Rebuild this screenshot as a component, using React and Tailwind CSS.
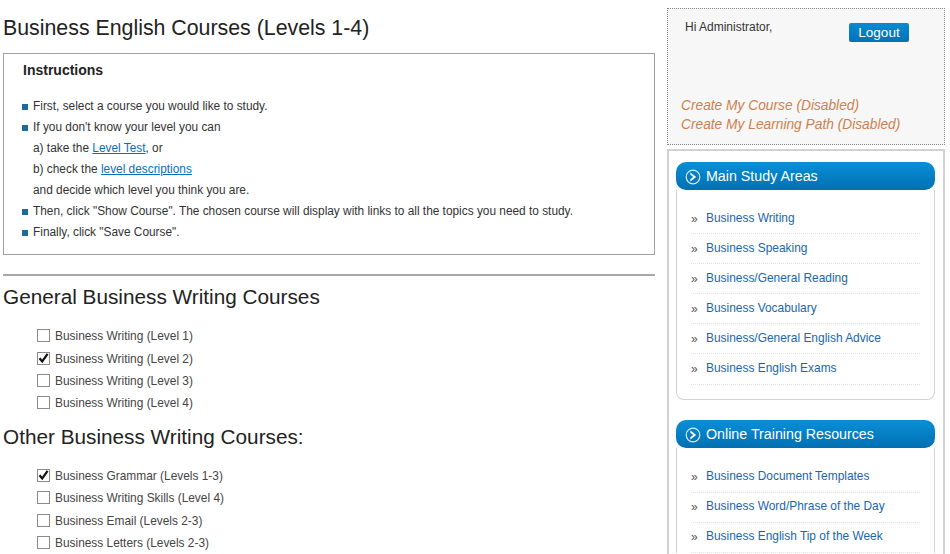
const FONT = "font-['Liberation_Sans',Arial,sans-serif]";

function Check({ label, checked }) {
  return (
    <label className="flex h-[22.4px] items-center pl-[34px]">
      <span className="relative mb-[3px] mr-[5px] flex h-[13px] w-[13px] shrink-0">
        <input type="checkbox" defaultChecked={checked} className="h-[13px] w-[13px] appearance-none border border-[#8a8a8a] bg-white" />
        {checked && (
          <svg viewBox="0 0 13 13" className="absolute left-0 top-0 h-[13px] w-[13px]">
            <path d="M2.5 6.2 L5.2 9.4 L10.6 1.8" fill="none" stroke="#111" strokeWidth="2.2" />
          </svg>
        )}
      </span>
      <span className="text-[11.9px] text-[#444]">{label}</span>
    </label>
  );
}

function Bullet({ children }) {
  return (
    <li className="flex h-[21px] items-center">
      <span className="mr-[5px] h-[6px] w-[6px] shrink-0 bg-[#1f6a9c]" />
      <span>{children}</span>
    </li>
  );
}

function Sub({ children }) {
  return <li className="flex h-[21px] items-center pl-[11px]"><span>{children}</span></li>;
}

function CircleArrow() {
  return (
    <svg viewBox="0 0 16 16" className="mr-[5px] h-[16px] w-[16px] shrink-0">
      <circle cx="8" cy="8" r="6.8" fill="none" stroke="#d5ecf8" strokeWidth="1.2" />
      <path d="M5.4 3.6 L11.2 8 L5.4 12.4 L5.4 10.2 L8.2 8 L5.4 5.8 Z" fill="#fff" />
    </svg>
  );
}

function Panel({ title, items, last }) {
  return (
    <section className={last ? "" : "mb-[20px]"}>
      <h3 className="flex h-[28px] items-center rounded-[10px] bg-gradient-to-b from-[#0a8fd6] to-[#0270b3] pl-[9px] pt-[2px] text-[14.25px] text-white">
        <CircleArrow />
        {title}
      </h3>
      <div className={`border-x border-[#d2d2d2] px-[14px] ${last ? "pt-[15px]" : "rounded-b-[8px] border-b pb-[14px] pt-[14px]"}`}>
        {items.map((t) => (
          <div key={t} className="flex h-[30.1px] items-center border-b border-dotted border-[#e2e2e2]">
            <span className="mr-[8px] w-[7px] text-[12px] leading-none text-[#555]">»</span>
            <a className="text-[11.93px] text-[#1a66ad]">{t}</a>
          </div>
        ))}
      </div>
    </section>
  );
}

export default function App() {
  return (
    <div className={`${FONT} flex h-[554px] w-[950px] overflow-hidden bg-white text-[#333]`}>
      <main className="ml-[3px] w-[652px] shrink-0">
        <h1 className="mt-[14px] h-[39px] text-[21.33px] font-normal leading-[28px] text-[#222]">Business English Courses (Levels 1-4)</h1>
        <div className="h-[202px] border border-[#a0a0a0] pl-[18px] pt-[7px] text-[11.87px]">
          <h2 className="h-[32px] pl-[1px] text-[14px] font-bold leading-[18px] text-[#222]">Instructions</h2>
          <ul className="mt-[3px]">
            <Bullet>First, select a course you would like to study.</Bullet>
            <Bullet>If you don't know your level you can</Bullet>
            <Sub>a) take the <a className="text-[#0a6ebd] underline">Level Test</a>, or</Sub>
            <Sub>b) check the <a className="text-[#0a6ebd] underline">level descriptions</a></Sub>
            <Sub>and decide which level you think you are.</Sub>
            <Bullet>Then, click "Show Course". The chosen course will display with links to all the topics you need to study.</Bullet>
            <Bullet>Finally, click "Save Course".</Bullet>
          </ul>
        </div>
        <hr className="mt-[19px] border-t-2 border-[#a8a8a8]" />
        <h2 className="mt-[8px] h-[42px] text-[20.75px] font-normal leading-[26px] text-[#222]">General Business Writing Courses</h2>
        <Check label="Business Writing (Level 1)" />
        <Check label="Business Writing (Level 2)" checked />
        <Check label="Business Writing (Level 3)" />
        <Check label="Business Writing (Level 4)" />
        <h2 className="mt-[8px] h-[42px] text-[20.75px] font-normal leading-[26px] text-[#222]">Other Business Writing Courses:</h2>
        <Check label="Business Grammar (Levels 1-3)" checked />
        <Check label="Business Writing Skills (Level 4)" />
        <Check label="Business Email (Levels 2-3)" />
        <Check label="Business Letters (Levels 2-3)" />
      </main>
      <aside className="ml-[12px] w-[278px] shrink-0 pt-[8px]">
        <div className="h-[137px] border border-dotted border-[#888] bg-[#f7f7f7] pl-[13px] pt-[11px]">
          <div className="flex items-start">
            <p className="ml-[4px] w-[164px] text-[12px] leading-[15px] text-[#333]">Hi Administrator,</p>
            <button className="mt-[3px] h-[19px] w-[60px] rounded-[2px] bg-gradient-to-b from-[#0a8ad0] to-[#0272b6] text-[13.5px] leading-[17px] text-white">Logout</button>
          </div>
          <p className="mt-[54px] text-[13.75px] italic leading-[19px] text-[#cf7f4c]">Create My Course (Disabled)</p>
          <p className="text-[13.75px] italic leading-[19px] text-[#cf7f4c]">Create My Learning Path (Disabled)</p>
        </div>
        <div className="mt-[4px] h-[420px] border-x-2 border-t-2 border-[#d2d2d2] pl-[7px] pr-[8px] pt-[11px]">
          <Panel title="Main Study Areas" items={["Business Writing", "Business Speaking", "Business/General Reading", "Business Vocabulary", "Business/General English Advice", "Business English Exams"]} />
          <Panel last title="Online Training Resources" items={["Business Document Templates", "Business Word/Phrase of the Day", "Business English Tip of the Week"]} />
        </div>
      </aside>
    </div>
  );
}
